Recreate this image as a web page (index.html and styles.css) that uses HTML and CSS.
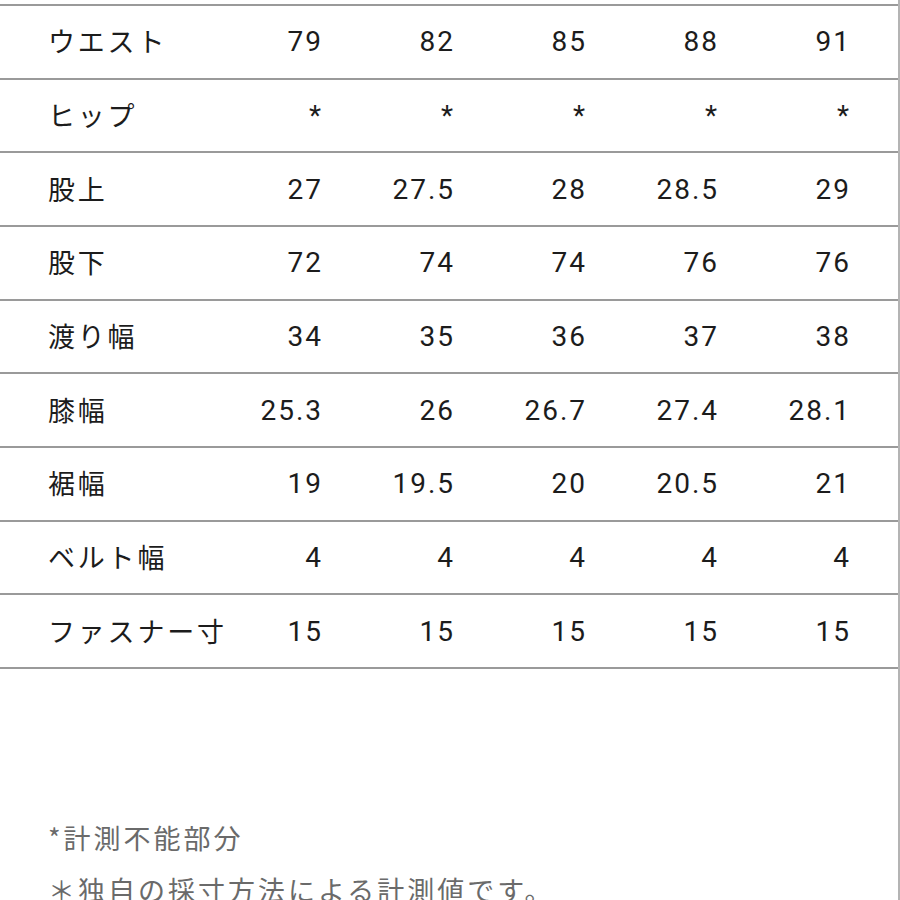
FILE: index.html
```html
<!DOCTYPE html>
<html lang="ja">
<head>
<meta charset="utf-8">
<link rel="stylesheet" href="styles.css">
</head>
<body>
<div class="page">
  <div class="table">
    <div class="row"><span class="label">ウエスト</span><span class="num">79</span><span class="num">82</span><span class="num">85</span><span class="num">88</span><span class="num">91</span></div>
    <div class="row"><span class="label">ヒップ</span><span class="num">*</span><span class="num">*</span><span class="num">*</span><span class="num">*</span><span class="num">*</span></div>
    <div class="row"><span class="label">股上</span><span class="num">27</span><span class="num">27.5</span><span class="num">28</span><span class="num">28.5</span><span class="num">29</span></div>
    <div class="row"><span class="label">股下</span><span class="num">72</span><span class="num">74</span><span class="num">74</span><span class="num">76</span><span class="num">76</span></div>
    <div class="row"><span class="label">渡り幅</span><span class="num">34</span><span class="num">35</span><span class="num">36</span><span class="num">37</span><span class="num">38</span></div>
    <div class="row"><span class="label">膝幅</span><span class="num">25.3</span><span class="num">26</span><span class="num">26.7</span><span class="num">27.4</span><span class="num">28.1</span></div>
    <div class="row"><span class="label">裾幅</span><span class="num">19</span><span class="num">19.5</span><span class="num">20</span><span class="num">20.5</span><span class="num">21</span></div>
    <div class="row"><span class="label">ベルト幅</span><span class="num">4</span><span class="num">4</span><span class="num">4</span><span class="num">4</span><span class="num">4</span></div>
    <div class="row"><span class="label">ファスナー寸</span><span class="num">15</span><span class="num">15</span><span class="num">15</span><span class="num">15</span><span class="num">15</span></div>
  </div>
  <div class="notes">
    <p class="note">*計測不能部分</p>
    <p class="note">＊独自の採寸方法による計測値です。</p>
  </div>
</div>
</body>
</html>
```
FILE: styles.css
```css
html, body {
  margin: 0;
  padding: 0;
  background: #fff;
}
body {
  width: 900px;
  height: 900px;
  overflow: hidden;
}
.page {
  box-sizing: border-box;
  width: 900px;
  height: 900px;
  padding-top: 4px;
  border-right: 2px solid #b4b4b4;
}
.table {
  border-top: 2px solid #9a9a9a;
}
.row {
  display: grid;
  grid-template-columns: 189px repeat(5, 132px);
  align-items: center;
  height: 71.67px;
  border-bottom: 2px solid #9a9a9a;
  color: #1c1c1c;
}
.label {
  padding-left: 48px;
  padding-bottom: 2px;
  font-family: "Noto Sans CJK JP", "Noto Sans", sans-serif;
  font-size: 27px;
  letter-spacing: 2.8px;
  white-space: nowrap;
}
.num {
  text-align: right;
  font-family: Roboto, "Noto Sans", sans-serif;
  font-size: 28px;
  letter-spacing: 2px;
  margin-right: -2px;
}
.notes {
  margin-top: 143px;
  padding-left: 48px;
}
.note {
  margin: 0;
  line-height: 52px;
  font-family: "Noto Sans CJK JP", "Noto Sans", sans-serif;
  font-size: 27px;
  letter-spacing: 3px;
  color: #6a6a6a;
  white-space: nowrap;
}
```
